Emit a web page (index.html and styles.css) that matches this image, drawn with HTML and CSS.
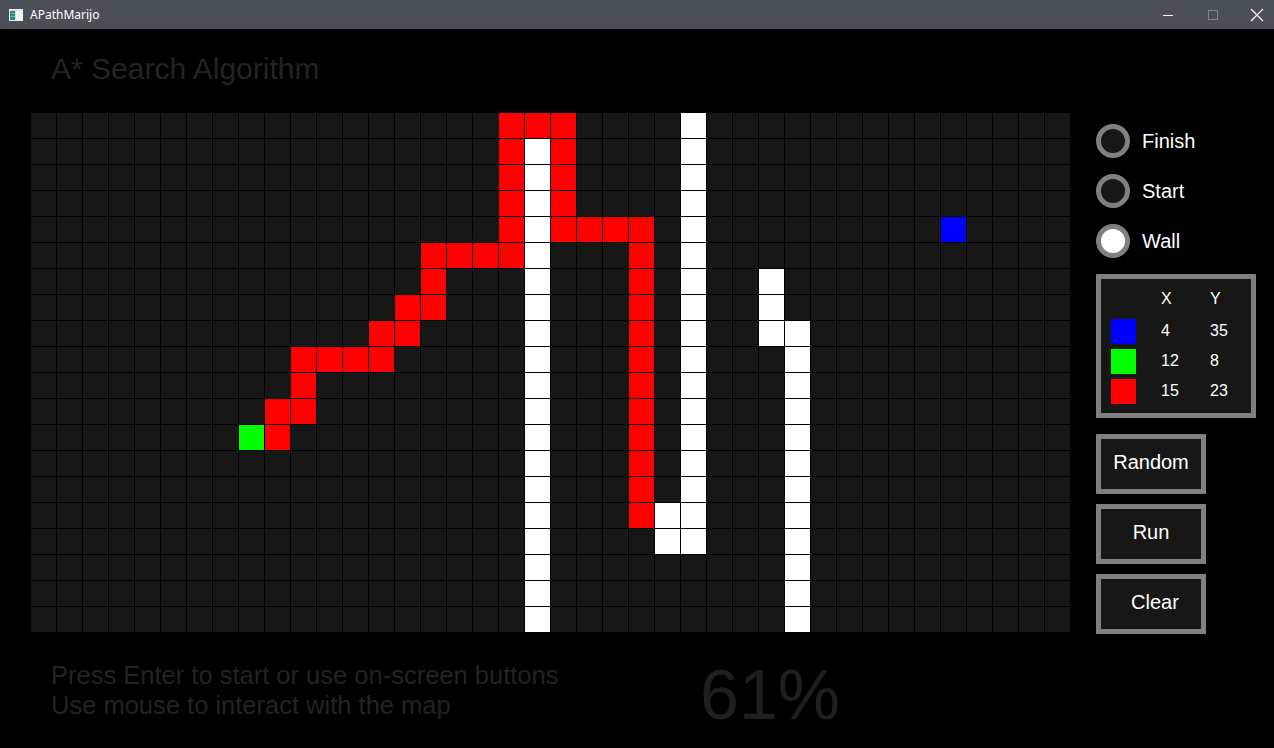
FILE: index.html
```html
<!DOCTYPE html>
<html lang="en">
<head>
<meta charset="utf-8">
<title>APathMarijo</title>
<link rel="stylesheet" href="styles.css">
</head>
<body>
<div class="window">
  <header class="titlebar">
    <svg class="app-icon" width="14" height="12" viewBox="0 0 14 12">
      <rect x="0.5" y="0.5" width="13" height="11" fill="#d5dbe0" stroke="#eef1f3"/>
      <rect x="1" y="2" width="5" height="9" fill="#2f8c6c"/>
      <rect x="1" y="4" width="5" height="1" fill="#5fb3d9"/>
      <rect x="1" y="7" width="5" height="1" fill="#5fb3d9"/>
      <rect x="7" y="2" width="6" height="9" fill="#f2f4f6"/>
    </svg>
    <span class="title">APathMarijo</span>
    <div class="controls">
      <span class="ctl">
        <svg width="10" height="10" viewBox="0 0 10 10"><line x1="0" y1="5.5" x2="10" y2="5.5" stroke="#ffffff" stroke-width="1"/></svg>
      </span>
      <span class="ctl">
        <svg width="10" height="10" viewBox="0 0 10 10"><rect x="0.5" y="0.5" width="9" height="9" fill="none" stroke="#80868b" stroke-width="1"/></svg>
      </span>
      <span class="ctl ctl-close">
        <svg width="14" height="14" viewBox="0 0 14 14"><path d="M1 1 L13 13 M13 1 L1 13" stroke="#ffffff" stroke-width="1.2"/></svg>
      </span>
    </div>
  </header>

  <main class="app">
    <h1 class="heading">A* Search Algorithm</h1>

    <div class="workspace">
      <div class="board">
        <i class="cell red" style="grid-area:1/19"></i>
        <i class="cell red" style="grid-area:1/20"></i>
        <i class="cell red" style="grid-area:1/21"></i>
        <i class="cell red" style="grid-area:2/19"></i>
        <i class="cell red" style="grid-area:2/21"></i>
        <i class="cell red" style="grid-area:3/19"></i>
        <i class="cell red" style="grid-area:3/21"></i>
        <i class="cell red" style="grid-area:4/19"></i>
        <i class="cell red" style="grid-area:4/21"></i>
        <i class="cell red" style="grid-area:5/19"></i>
        <i class="cell red" style="grid-area:5/21"></i>
        <i class="cell red" style="grid-area:5/22"></i>
        <i class="cell red" style="grid-area:5/23"></i>
        <i class="cell red" style="grid-area:5/24"></i>
        <i class="cell red" style="grid-area:6/16"></i>
        <i class="cell red" style="grid-area:6/17"></i>
        <i class="cell red" style="grid-area:6/18"></i>
        <i class="cell red" style="grid-area:6/19"></i>
        <i class="cell red" style="grid-area:6/24"></i>
        <i class="cell red" style="grid-area:7/16"></i>
        <i class="cell red" style="grid-area:7/24"></i>
        <i class="cell red" style="grid-area:8/15"></i>
        <i class="cell red" style="grid-area:8/16"></i>
        <i class="cell red" style="grid-area:8/24"></i>
        <i class="cell red" style="grid-area:9/14"></i>
        <i class="cell red" style="grid-area:9/15"></i>
        <i class="cell red" style="grid-area:9/24"></i>
        <i class="cell red" style="grid-area:10/11"></i>
        <i class="cell red" style="grid-area:10/12"></i>
        <i class="cell red" style="grid-area:10/13"></i>
        <i class="cell red" style="grid-area:10/14"></i>
        <i class="cell red" style="grid-area:10/24"></i>
        <i class="cell red" style="grid-area:11/11"></i>
        <i class="cell red" style="grid-area:11/24"></i>
        <i class="cell red" style="grid-area:12/10"></i>
        <i class="cell red" style="grid-area:12/11"></i>
        <i class="cell red" style="grid-area:12/24"></i>
        <i class="cell red" style="grid-area:13/10"></i>
        <i class="cell red" style="grid-area:13/24"></i>
        <i class="cell red" style="grid-area:14/24"></i>
        <i class="cell red" style="grid-area:15/24"></i>
        <i class="cell red" style="grid-area:16/24"></i>

        <i class="cell green" style="grid-area:13/9"></i>
        <i class="cell blue" style="grid-area:5/36"></i>

        <i class="cell wall" style="grid-area:2/20"></i>
        <i class="cell wall" style="grid-area:3/20"></i>
        <i class="cell wall" style="grid-area:4/20"></i>
        <i class="cell wall" style="grid-area:5/20"></i>
        <i class="cell wall" style="grid-area:6/20"></i>
        <i class="cell wall" style="grid-area:7/20"></i>
        <i class="cell wall" style="grid-area:8/20"></i>
        <i class="cell wall" style="grid-area:9/20"></i>
        <i class="cell wall" style="grid-area:10/20"></i>
        <i class="cell wall" style="grid-area:11/20"></i>
        <i class="cell wall" style="grid-area:12/20"></i>
        <i class="cell wall" style="grid-area:13/20"></i>
        <i class="cell wall" style="grid-area:14/20"></i>
        <i class="cell wall" style="grid-area:15/20"></i>
        <i class="cell wall" style="grid-area:16/20"></i>
        <i class="cell wall" style="grid-area:17/20"></i>
        <i class="cell wall" style="grid-area:18/20"></i>
        <i class="cell wall" style="grid-area:19/20"></i>
        <i class="cell wall" style="grid-area:20/20"></i>

        <i class="cell wall" style="grid-area:1/26"></i>
        <i class="cell wall" style="grid-area:2/26"></i>
        <i class="cell wall" style="grid-area:3/26"></i>
        <i class="cell wall" style="grid-area:4/26"></i>
        <i class="cell wall" style="grid-area:5/26"></i>
        <i class="cell wall" style="grid-area:6/26"></i>
        <i class="cell wall" style="grid-area:7/26"></i>
        <i class="cell wall" style="grid-area:8/26"></i>
        <i class="cell wall" style="grid-area:9/26"></i>
        <i class="cell wall" style="grid-area:10/26"></i>
        <i class="cell wall" style="grid-area:11/26"></i>
        <i class="cell wall" style="grid-area:12/26"></i>
        <i class="cell wall" style="grid-area:13/26"></i>
        <i class="cell wall" style="grid-area:14/26"></i>
        <i class="cell wall" style="grid-area:15/26"></i>
        <i class="cell wall" style="grid-area:16/26"></i>
        <i class="cell wall" style="grid-area:17/26"></i>
        <i class="cell wall" style="grid-area:16/25"></i>
        <i class="cell wall" style="grid-area:17/25"></i>

        <i class="cell wall" style="grid-area:7/29"></i>
        <i class="cell wall" style="grid-area:8/29"></i>
        <i class="cell wall" style="grid-area:9/29"></i>

        <i class="cell wall" style="grid-area:9/30"></i>
        <i class="cell wall" style="grid-area:10/30"></i>
        <i class="cell wall" style="grid-area:11/30"></i>
        <i class="cell wall" style="grid-area:12/30"></i>
        <i class="cell wall" style="grid-area:13/30"></i>
        <i class="cell wall" style="grid-area:14/30"></i>
        <i class="cell wall" style="grid-area:15/30"></i>
        <i class="cell wall" style="grid-area:16/30"></i>
        <i class="cell wall" style="grid-area:17/30"></i>
        <i class="cell wall" style="grid-area:18/30"></i>
        <i class="cell wall" style="grid-area:19/30"></i>
        <i class="cell wall" style="grid-area:20/30"></i>
      </div>

      <aside class="side">
        <div class="modes">
          <div class="mode"><span class="radio"></span><span>Finish</span></div>
          <div class="mode"><span class="radio"></span><span>Start</span></div>
          <div class="mode"><span class="radio radio-on"></span><span>Wall</span></div>
        </div>

        <div class="info">
          <span></span><span class="hdr">X</span><span class="hdr">Y</span>
          <span class="swatch sw-blue"></span><span class="val">4</span><span class="val">35</span>
          <span class="swatch sw-green"></span><span class="val">12</span><span class="val">8</span>
          <span class="swatch sw-red"></span><span class="val">15</span><span class="val">23</span>
        </div>

        <div class="actions">
          <button class="btn">Random</button>
          <button class="btn">Run</button>
          <button class="btn btn-clear">Clear</button>
        </div>
      </aside>
    </div>

    <footer class="footer">
      <p class="help">Press Enter to start or use on-screen buttons<br>Use mouse to interact with the map</p>
      <div class="progress">61%</div>
    </footer>
  </main>
</div>
</body>
</html>
```

FILE: styles.css
```css
* { box-sizing: border-box; }

html, body {
  margin: 0;
  padding: 0;
  background: #000;
  width: 1274px;
  height: 748px;
  overflow: hidden;
}

body {
  font-family: "Liberation Sans", Arial, sans-serif;
  color: #fff;
}

.titlebar {
  height: 29px;
  background: #4a5056;
  display: flex;
  align-items: center;
}

.app-icon {
  margin-left: 9px;
  display: block;
}

.title {
  margin-left: 7px;
  font-family: "Noto Sans", "Liberation Sans", sans-serif;
  font-size: 12px;
  color: #fff;
  line-height: 29px;
}

.controls {
  margin-left: auto;
  display: flex;
  height: 29px;
}

.ctl {
  width: 45px;
  height: 29px;
  display: flex;
  align-items: center;
  justify-content: center;
}

.ctl svg { display: block; }

.ctl-close {
  width: 39px;
  justify-content: flex-start;
  padding-left: 15px;
}

.app {
  padding: 25px 0 0 31px;
}

.heading {
  margin: 0 0 29px 20px;
  font-size: 30px;
  line-height: 30px;
  font-weight: normal;
  color: #232323;
}

.workspace {
  display: flex;
  align-items: flex-start;
  gap: 26px;
}

.board {
  width: 1039px;
  height: 519px;
  display: grid;
  grid-template-columns: repeat(40, 25px);
  grid-template-rows: repeat(20, 25px);
  gap: 1px;
  background-color: #171717;
  background-image:
    linear-gradient(to right, transparent 25px, #000 25px),
    linear-gradient(to bottom, transparent 25px, #000 25px);
  background-size: 26px 26px;
}

.cell { display: block; }
.red { background: #ff0000; }
.green { background: #00ff00; }
.blue { background: #0000ff; }
.wall { background: #ffffff; }

.side {
  width: 160px;
  padding-top: 11px;
  display: flex;
  flex-direction: column;
}

.modes {
  display: flex;
  flex-direction: column;
  gap: 16px;
}

.mode {
  display: flex;
  align-items: center;
  gap: 12px;
  height: 34px;
  font-size: 20px;
  color: #fff;
}

.radio {
  width: 34px;
  height: 34px;
  border-radius: 50%;
  border: 5px solid #808080;
  background: #171717;
  flex: none;
}

.radio-on { background: #fff; }

.info {
  margin-top: 16px;
  width: 160px;
  height: 144px;
  border: 5px solid #808080;
  background: #171717;
  padding: 5px 0 0 10px;
  display: grid;
  grid-template-columns: 50px 49px 1fr;
  grid-template-rows: 30px 25px 25px 25px;
  row-gap: 5px;
  align-items: center;
  font-size: 16px;
  color: #fff;
}

.hdr { font-size: 16px; }

.val { margin-top: -2px; }

.swatch {
  width: 25px;
  height: 25px;
}
.sw-blue { background: #0000ff; }
.sw-green { background: #00ff00; }
.sw-red { background: #ff0000; }

.actions {
  margin-top: 16px;
  display: flex;
  flex-direction: column;
  gap: 10px;
}

.btn {
  width: 110px;
  height: 60px;
  border: 5px solid #808080;
  background: #171717;
  color: #fff;
  font-family: "Liberation Sans", Arial, sans-serif;
  font-size: 20px;
  padding: 0 0 4px 0;
  margin: 0;
  border-radius: 0;
}

.btn-clear { padding-left: 8px; }

.footer {
  margin-top: 26px;
  padding-left: 20px;
  display: flex;
  align-items: flex-start;
}

.help {
  margin: 0;
  width: 649px;
  font-size: 25.5px;
  line-height: 30px;
  color: #232323;
}

.progress {
  font-size: 70px;
  line-height: 70px;
  margin-top: 0;
  color: #1f1f1f;
}
```
